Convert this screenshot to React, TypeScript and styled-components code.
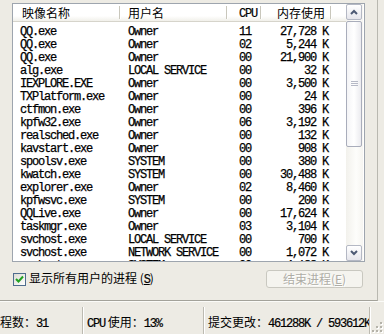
import React from "react";
import styled, { createGlobalStyle } from "styled-components";

const GlobalStyle = createGlobalStyle`
  html, body {
    margin: 0;
    padding: 0;
    background: #edebe4;
  }
  body {
    width: 384px;
    height: 334px;
    overflow: hidden;
    font-family: "Noto Sans CJK SC", "Liberation Sans", sans-serif;
    color: #000;
  }
`;

type Proc = { name: string; user: string; cpu: string; mem: string };

const procs: Proc[] = [
    { name: "QQ.exe", user: "Owner", cpu: "11", mem: "27,728 K" },
    { name: "QQ.exe", user: "Owner", cpu: "02", mem: "5,244 K" },
    { name: "QQ.exe", user: "Owner", cpu: "00", mem: "21,900 K" },
    { name: "alg.exe", user: "LOCAL SERVICE", cpu: "00", mem: "32 K" },
    { name: "IEXPLORE.EXE", user: "Owner", cpu: "00", mem: "3,500 K" },
    { name: "TXPlatform.exe", user: "Owner", cpu: "00", mem: "24 K" },
    { name: "ctfmon.exe", user: "Owner", cpu: "00", mem: "396 K" },
    { name: "kpfw32.exe", user: "Owner", cpu: "06", mem: "3,192 K" },
    { name: "realsched.exe", user: "Owner", cpu: "00", mem: "132 K" },
    { name: "kavstart.exe", user: "Owner", cpu: "00", mem: "908 K" },
    { name: "spoolsv.exe", user: "SYSTEM", cpu: "00", mem: "380 K" },
    { name: "kwatch.exe", user: "SYSTEM", cpu: "00", mem: "30,488 K" },
    { name: "explorer.exe", user: "Owner", cpu: "02", mem: "8,460 K" },
    { name: "kpfwsvc.exe", user: "SYSTEM", cpu: "00", mem: "200 K" },
    { name: "QQLive.exe", user: "Owner", cpu: "00", mem: "17,624 K" },
    { name: "taskmgr.exe", user: "Owner", cpu: "03", mem: "3,104 K" },
    { name: "svchost.exe", user: "LOCAL SERVICE", cpu: "00", mem: "700 K" },
    { name: "svchost.exe", user: "NETWORK SERVICE", cpu: "00", mem: "1,072 K" },
    { name: "svchost.exe", user: "SYSTEM", cpu: "00", mem: "4,188 K" },
];

const Window = styled.div`
    width: 384px;
    height: 334px;
    display: flex;
    flex-direction: column;
    overflow: hidden;
    background: #edebe4;
`;

const TabPanel = styled.div`
    width: 378px;
    height: 301px;
    box-sizing: border-box;
    padding: 3px 0 0 12px;
    border-right: 1px solid #b9b8b0;
    border-bottom: 1px solid #a3a29a;
    display: flex;
    flex-direction: column;
    flex-shrink: 0;
`;

const ListBox = styled.div`
    width: 353px;
    height: 259px;
    box-sizing: border-box;
    border: 1px solid #9ea5ae;
    background: #fff;
    display: flex;
    overflow: hidden;
`;

const Table = styled.div`
    width: 333px;
    display: flex;
    flex-direction: column;
    overflow: hidden;
`;

const Header = styled.div`
    height: 18px;
    flex-shrink: 0;
    display: flex;
    align-items: center;
    box-sizing: border-box;
    background: linear-gradient(#ffffff 0%, #ffffff 70%, #f1f0ea 100%);
    border-bottom: 1px solid #d6d4cb;
`;

const HeaderCell = styled.div<{ $w: number; $right?: boolean; $pad: number }>`
    width: ${({ $w }) => $w}px;
    box-sizing: border-box;
    text-align: ${({ $right }) => ($right ? "right" : "left")};
    padding: ${({ $right, $pad }) => ($right ? `0 ${$pad}px 0 0` : `0 0 0 ${$pad}px`)};
    font-size: 12px;
    line-height: 16px;
    white-space: nowrap;
`;

const Divider = styled.div`
    width: 1px;
    height: 13px;
    background: #c9c7bc;
    box-shadow: 1px 0 0 #ffffff;
`;

const Latin = styled.span`
    font-family: "Liberation Mono", monospace;
    letter-spacing: -1.2px;
    -webkit-text-stroke: 0.2px #000;
`;

const Rows = styled.div`
    display: flex;
    flex-direction: column;
    padding-top: 4px;
`;

const Row = styled.div`
    height: 13px;
    flex-shrink: 0;
    display: flex;
    font-family: "Liberation Mono", monospace;
    font-size: 12px;
    letter-spacing: -1.2px;
    line-height: 13px;
    white-space: nowrap;
    -webkit-text-stroke: 0.25px #000;
`;

const Cell = styled.div<{ $w: number; $right?: boolean; $pad: number }>`
    width: ${({ $w }) => $w}px;
    box-sizing: border-box;
    text-align: ${({ $right }) => ($right ? "right" : "left")};
    padding: ${({ $right, $pad }) => ($right ? `0 ${$pad}px 0 0` : `0 0 0 ${$pad}px`)};
`;

const ScrollBar = styled.div`
    width: 17px;
    display: flex;
    flex-direction: column;
    background: linear-gradient(to right, #f2f1ec, #fdfdfb 60%, #f6f5f1);
`;

const ScrollButton = styled.div`
    width: 16px;
    height: 16px;
    box-sizing: border-box;
    flex-shrink: 0;
    border: 1px solid #b4b8c4;
    border-radius: 2px;
    background: linear-gradient(#ffffff, #e6e6ec);
    display: flex;
    align-items: center;
    justify-content: center;
`;

const Track = styled.div`
    flex: 1;
    display: flex;
    flex-direction: column;
    padding-top: 1px;
`;

const Thumb = styled.div`
    width: 16px;
    height: 126px;
    box-sizing: border-box;
    border: 1px solid #a9adbb;
    border-radius: 2px;
    background: linear-gradient(to right, #f4f4f6, #ffffff 50%, #ebebef);
    display: flex;
    align-items: center;
    justify-content: center;
`;

const Controls = styled.div`
    height: 18px;
    margin-top: 8px;
    width: 351px;
    display: flex;
    align-items: center;
    justify-content: space-between;
`;

const CheckLabel = styled.label`
    display: flex;
    align-items: center;
    gap: 3px;
    margin-left: 1px;
    font-size: 12px;
    line-height: 14px;
    white-space: nowrap;
`;

const CheckBox = styled.span`
    width: 13px;
    height: 13px;
    box-sizing: border-box;
    border: 1px solid #4f6d8e;
    background: linear-gradient(135deg, #dcdcd4, #ffffff);
    display: flex;
    align-items: center;
    justify-content: center;
`;

const Under = styled.span`
    text-decoration: underline;
`;

const EndButton = styled.div`
    width: 97px;
    height: 18px;
    box-sizing: border-box;
    border: 1px solid #c9c8c0;
    border-radius: 3px;
    background: #f5f4ef;
    color: #aeada6;
    font-size: 12px;
    line-height: 16px;
    text-align: center;
    white-space: nowrap;
    text-shadow: 1px 1px 0 #ffffff;

    span {
        -webkit-text-stroke: 0;
    }
`;

const StatusBar = styled.div`
    flex: 1;
    display: flex;
    border-top: 1px solid #fbfbf8;
    padding-top: 5px;
    overflow: hidden;
`;

const Panel = styled.div<{ $w?: number; $offset?: number }>`
    ${({ $w }) => ($w ? `width: ${$w}px; flex-shrink: 0;` : "flex: 1;")}
    margin-left: ${({ $offset }) => $offset ?? 0}px;
    box-sizing: border-box;
    padding: 8px 0 0 4px;
    font-size: 12px;
    line-height: 14px;
    white-space: nowrap;
    overflow: hidden;
    border-right: 1px solid #bcbab1;
    box-shadow: 1px 0 0 #ffffff;
`;

const Grip = styled.div`
    width: 14px;
    flex-shrink: 0;
    display: flex;
    align-items: flex-end;
`;

const Chevron = ({ up }: { up?: boolean }) => (
    <svg width="8" height="6" viewBox="0 0 8 6">
        <polyline
            points={up ? "1,5 4,2 7,5" : "1,1 4,4 7,1"}
            fill="none"
            stroke="#4d5a74"
            strokeWidth="2"
        />
    </svg>
);

const cols = [
    { w: 107, hp: 9, rp: 7 },
    { w: 107, hp: 8, rp: 8 },
    { w: 34, hp: 12, rp: 12 },
    { w: 70, hp: 5, rp: 3, right: true },
];

export default function App() {
    return (
        <>
            <GlobalStyle />
            <Window>
                <TabPanel>
                    <ListBox>
                        <Table>
                            <Header>
                                <HeaderCell $w={cols[0].w - 1} $pad={cols[0].hp}>映像名称</HeaderCell>
                                <Divider />
                                <HeaderCell $w={cols[1].w - 1} $pad={cols[1].hp}>用户名</HeaderCell>
                                <Divider />
                                <HeaderCell $w={cols[2].w - 1} $pad={cols[2].hp}><Latin>CPU</Latin></HeaderCell>
                                <Divider />
                                <HeaderCell $w={cols[3].w - 1} $pad={cols[3].hp} $right>内存使用</HeaderCell>
                                <Divider />
                            </Header>
                            <Rows>
                                {procs.map((p, i) => (
                                    <Row key={i}>
                                        <Cell $w={cols[0].w} $pad={cols[0].rp}>{p.name}</Cell>
                                        <Cell $w={cols[1].w} $pad={cols[1].rp}>{p.user}</Cell>
                                        <Cell $w={cols[2].w} $pad={cols[2].rp}>{p.cpu}</Cell>
                                        <Cell $w={cols[3].w} $pad={cols[3].rp} $right>{p.mem}</Cell>
                                    </Row>
                                ))}
                            </Rows>
                        </Table>
                        <ScrollBar>
                            <ScrollButton><Chevron up /></ScrollButton>
                            <Track>
                                <Thumb>
                                    <svg width="7" height="6" viewBox="0 0 7 6">
                                        <path d="M0 0.5h7M0 2.5h7M0 4.5h7" stroke="#b6b9c6" strokeWidth="1" />
                                    </svg>
                                </Thumb>
                            </Track>
                            <ScrollButton><Chevron /></ScrollButton>
                        </ScrollBar>
                    </ListBox>
                    <Controls>
                        <CheckLabel>
                            <CheckBox>
                                <svg width="9" height="9" viewBox="0 0 9 9">
                                    <polyline points="1,4 3.5,6.5 8,1.5" fill="none" stroke="#21a121" strokeWidth="2" />
                                </svg>
                            </CheckBox>
                            <span>显示所有用户的进程 (<Under><Latin>S</Latin></Under>)</span>
                        </CheckLabel>
                        <EndButton>结束进程(<Under>E</Under>)</EndButton>
                    </Controls>
                </TabPanel>
                <StatusBar>
                    <Panel $w={99} $offset={-16}>进程数：<Latin>31</Latin></Panel>
                    <Panel $w={121}><Latin>CPU</Latin> 使用：<Latin>13%</Latin></Panel>
                    <Panel>提交更改：<Latin>461288K / 593612K</Latin></Panel>
                    <Grip>
                        <svg width="14" height="14" viewBox="0 0 14 14">
                            {[[11, 3], [11, 7], [7, 7], [11, 11], [7, 11], [3, 11]].map(([x, y], i) => (
                                <g key={i}>
                                    <rect x={x} y={y} width="2" height="2" fill="#ffffff" />
                                    <rect x={x - 1} y={y - 1} width="2" height="2" fill="#b5b3aa" />
                                </g>
                            ))}
                        </svg>
                    </Grip>
                </StatusBar>
            </Window>
        </>
    );
}
